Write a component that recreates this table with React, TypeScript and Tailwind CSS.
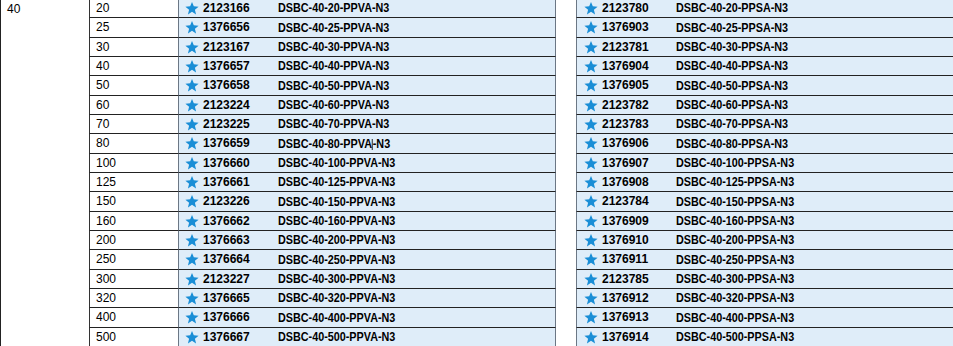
import React from "react";

const rows: [string, string, string][] = [
  ["20", "2123166", "2123780"],
  ["25", "1376656", "1376903"],
  ["30", "2123167", "2123781"],
  ["40", "1376657", "1376904"],
  ["50", "1376658", "1376905"],
  ["60", "2123224", "2123782"],
  ["70", "2123225", "2123783"],
  ["80", "1376659", "1376906"],
  ["100", "1376660", "1376907"],
  ["125", "1376661", "1376908"],
  ["150", "2123226", "2123784"],
  ["160", "1376662", "1376909"],
  ["200", "1376663", "1376910"],
  ["250", "1376664", "1376911"],
  ["300", "2123227", "2123785"],
  ["320", "1376665", "1376912"],
  ["400", "1376666", "1376913"],
  ["500", "1376667", "1376914"],
];

function Star() {
  return (
    <svg width="14" height="14" viewBox="0 0 24 24" className="shrink-0">
      <path
        d="M12 1.5l3.1 7.6 8.2.6-6.3 5.3 2 8-7-4.4-7 4.4 2-8L.7 9.7l8.2-.6z"
        fill="#1a8ed6"
      />
    </svg>
  );
}

export default function App() {
  return (
    <div
      className="w-[953px] h-[346px] overflow-hidden bg-white text-black"
      style={{ fontFamily: '"Liberation Sans", Arial, sans-serif' }}
    >
      <div className="flex -mt-[1px]">
        <div className="w-[89px] shrink-0 border-l border-[#222] pl-[6px] pt-[3px] text-[12px] leading-[14px]">
          40
        </div>
        <div className="flex flex-col">
          {rows.map(([len, a, b]) => (
            <div key={len} className="flex h-[19.333px]">
              <div className="w-[89px] shrink-0 border-l border-b border-l-[#333] border-b-[#222] pl-[6px] flex items-center text-[12px]">
                {len}
              </div>
              <div className="w-[378px] shrink-0 bg-[#dfedf9] border-l border-r border-b border-l-[#6b7785] border-r-[#6b7785] border-b-[#222] flex items-center pl-[6px]">
                <Star />
                <span className="ml-[4px] w-[75px] shrink-0 font-bold text-[12px]">{a}</span>
                <span className="inline-block whitespace-nowrap origin-left scale-x-[0.83] font-bold text-[13px]">
                  {len === "80" ? (
                    <>
                      DSBC-40-80-PPVA
                      <span className="inline-block w-px h-[11px] bg-black align-middle" />
                      -N3
                    </>
                  ) : (
                    `DSBC-40-${len}-PPVA-N3`
                  )}
                </span>
              </div>
              <div className="w-[20px] shrink-0" />
              <div className="w-[400px] shrink-0 bg-[#dfedf9] border-l border-b border-l-[#6b7785] border-b-[#222] flex items-center pl-[7px]">
                <Star />
                <span className="ml-[4px] w-[74px] shrink-0 font-bold text-[12px]">{b}</span>
                <span className="inline-block whitespace-nowrap origin-left scale-x-[0.83] font-bold text-[13px]">
                  {`DSBC-40-${len}-PPSA-N3`}
                </span>
              </div>
            </div>
          ))}
        </div>
      </div>
    </div>
  );
}
